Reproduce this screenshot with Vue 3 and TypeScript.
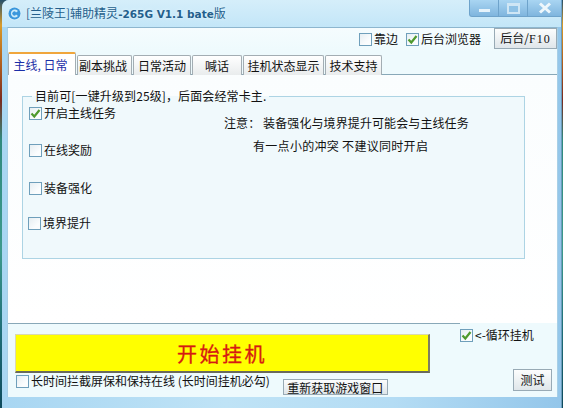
<template>
  <div class="desktop">
    <div class="window">
      <header class="titlebar">
        <svg class="app-icon" width="15" height="15" viewBox="0 0 15 15">
          <circle cx="7.5" cy="7.5" r="7" fill="#d7eef9" />
          <circle cx="7.5" cy="7.5" r="6" fill="#3b97dc" />
          <path d="M11 5 A4 4 0 1 0 11 10 L9 8.5 A2 2 0 1 1 9 6.5 Z" fill="#cdebfa" />
        </svg>
        <span class="app-title">[兰陵王]辅助精灵<b>-265G V1.1 bate</b>版</span>
        <div class="win-btns">
          <button class="win-btn min"><i></i></button>
          <button class="win-btn max"><i></i></button>
          <button class="win-btn close">
            <svg width="14" height="12" viewBox="0 0 14 12"><path d="M2 1.5 L12 10.5 M12 1.5 L2 10.5" stroke="#eef7fc" stroke-width="3" /></svg>
          </button>
        </div>
      </header>

      <div class="client">
        <div class="toolbar">
          <label class="check">
            <span class="box"></span>靠边
          </label>
          <label class="check browser">
            <span class="box"><svg width="11" height="11" viewBox="0 0 11 11"><path d="M1.5 5.5 L4.3 8.5 L9.5 2" fill="none" stroke="#4f9a2e" stroke-width="2.2" /></svg></span>后台浏览器
          </label>
          <button class="btn back-btn">后台/<span class="mono">F10</span></button>
        </div>

        <nav class="tabs">
          <div
            v-for="tab in tabs"
            :key="tab.label"
            class="tab"
            :class="{ active: tab.active }"
            :style="{ width: `${tab.width}px` }"
          >
            {{ tab.label }}
          </div>
        </nav>

        <section class="panel">
          <fieldset class="group">
            <legend>目前可[一键升级到25级]，后面会经常卡主.</legend>
            <div class="group-body">
              <div class="tasks">
                <label
                  v-for="task in tasks"
                  :key="task.label"
                  class="check"
                  :class="task.cls"
                >
                  <span class="box">
                    <svg v-if="task.checked" width="11" height="11" viewBox="0 0 11 11"><path d="M1.5 5.5 L4.3 8.5 L9.5 2" fill="none" stroke="#4f9a2e" stroke-width="2.2" /></svg>
                  </span>{{ task.label }}
                </label>
              </div>
              <div class="notes">
                <p class="note-a">注意：  装备强化与境界提升可能会与主线任务</p>
                <p class="note-b">有一点小的冲突 不建议同时开启</p>
              </div>
            </div>
          </fieldset>
        </section>

        <footer class="bottom">
          <div class="bottom-left">
            <button class="start">开始挂机</button>
            <div class="bottom-row">
              <label class="check">
                <span class="box"></span>长时间拦截屏保和保持在线 (长时间挂机必勾)
              </label>
              <button class="btn refetch">重新获取游戏窗口</button>
            </div>
          </div>
          <div class="bottom-right">
            <label class="check">
              <span class="box"><svg width="11" height="11" viewBox="0 0 11 11"><path d="M1.5 5.5 L4.3 8.5 L9.5 2" fill="none" stroke="#4f9a2e" stroke-width="2.2" /></svg></span>&lt;-循环挂机
            </label>
            <button class="btn test">测试</button>
          </div>
        </footer>
      </div>
    </div>
  </div>
</template>

<script setup lang="ts">
interface Tab {
  label: string
  width: number
  active?: boolean
}

const tabs: Tab[] = [
  { label: '主线, 日常', width: 68, active: true },
  { label: '副本挑战', width: 55 },
  { label: '日常活动', width: 58 },
  { label: '喊话', width: 50 },
  { label: '挂机状态显示', width: 81 },
  { label: '技术支持', width: 57 }
]

const tasks = [
  { label: '开启主线任务', checked: true, cls: 't1' },
  { label: '在线奖励', checked: false, cls: 't2' },
  { label: '装备强化', checked: false, cls: 't3' },
  { label: '境界提升', checked: false, cls: 't4' }
]
</script>

<style>
html,
body {
  margin: 0;
  background: #123;
}
</style>

<style scoped>
.desktop {
  width: 563px;
  height: 408px;
  padding-left: 2px;
  box-sizing: border-box;
  overflow: hidden;
  background: linear-gradient(180deg, #27506a 0, #d99b2a 25px, #b5641e 60px, #7a2a20 100px, #2f8a7e 140px, #3d9a8c 250px, #1f6f78 330px, #0e4a5c 408px);
  font-family: "Noto Sans CJK SC", "Noto Sans", sans-serif;
  font-size: 12px;
  line-height: 14px;
  color: #111;
}
.window {
  width: 560px;
  height: 408px;
  box-sizing: border-box;
  padding: 0 3px 11px 5px;
  display: flex;
  flex-direction: column;
  border-radius: 7px 7px 0 0;
  background: linear-gradient(90deg, #a8d6f2 0, #bfe3f6 40%, #b4dcf4 70%, #93c6ea 100%);
  border-right: 1px solid #6d9dbd;
}
.titlebar {
  height: 27px;
  flex: none;
  display: flex;
  align-items: flex-start;
  margin: 0 -3px 0 -5px;
  padding-left: 5px;
  border-radius: 7px 7px 0 0;
  background: linear-gradient(180deg, #d5eefa 0, #c3e6f8 100%);
}
.app-icon {
  flex: none;
  margin: 6px 0 0 0;
}
.app-title {
  margin: 6px 0 0 4px;
  color: #245f8c;
  text-shadow: 0 0 3px #eaf8ff;
  white-space: nowrap;
}
.app-title b {
  font-family: "DejaVu Sans", sans-serif;
  font-size: 10.5px;
}
.win-btns {
  margin-left: auto;
  margin-right: -1px;
  display: flex;
}
.win-btn {
  height: 17px;
  padding: 0;
  border: 1px solid #6ea3cb;
  border-top: none;
  border-left-width: 0;
  background: linear-gradient(180deg, #a9d5f2 0, #7fb5de 100%);
  display: flex;
  align-items: center;
  justify-content: center;
}
.win-btn.min {
  width: 30px;
  border-left-width: 1px;
  border-bottom-left-radius: 3px;
}
.win-btn.min i {
  display: block;
  width: 11px;
  height: 3px;
  margin-top: 5px;
  background: #e6f3fb;
}
.win-btn.max {
  width: 29px;
}
.win-btn.max i {
  display: block;
  width: 9px;
  height: 6px;
  border: 2px solid #cfe6f5;
  border-top-width: 3px;
  background: #8fc2e6;
}
.win-btn.close {
  width: 34px;
}
.client {
  flex: 1;
  min-height: 0;
  display: flex;
  flex-direction: column;
  background: #eefafd;
  border-top: 1px solid #8db6cf;
  border-left: 1px solid #a7cfe6;
  border-right: 1px solid #a7cfe6;
}
.toolbar {
  height: 24px;
  display: flex;
  align-items: flex-start;
  background: linear-gradient(180deg, #f5fcfe 0, #eefafd 100%);
  padding-right: 0;
  justify-content: flex-end;
}
.check {
  display: inline-flex;
  align-items: center;
  white-space: nowrap;
}
.box {
  width: 11px;
  height: 11px;
  flex: none;
  margin-right: 2px;
  border: 1px solid #6f9fbb;
  background: linear-gradient(135deg, #e6eef2 0, #fbfdfe 70%);
  display: flex;
  align-items: center;
  justify-content: center;
}
.toolbar .check {
  margin-top: 4px;
}
.toolbar .browser {
  margin-left: 8px;
  margin-right: 13px;
}
.btn {
  padding: 0;
  font: inherit;
  color: #111;
  border: 1px solid #98aab5;
  background: linear-gradient(180deg, #fcfdfd 0, #dfe6ea 100%);
}
.back-btn {
  width: 63px;
  height: 21px;
}
.mono {
  font-family: "Liberation Serif", serif;
  letter-spacing: 1px;
}
.tabs {
  height: 23px;
  display: flex;
  align-items: flex-end;
  position: relative;
  z-index: 1;
  margin-bottom: -1px;
  gap: 1px;
  padding-left: 0;
}
.tab {
  height: 20px;
  box-sizing: border-box;
  border: 1px solid #a3adb3;
  border-bottom: none;
  border-radius: 2px 2px 0 0;
  background: linear-gradient(180deg, #ffffff 0, #e9eced 100%);
  display: flex;
  align-items: center;
  justify-content: center;
  white-space: nowrap;
}
.tab:nth-child(2) {
  padding-right: 3px;
}
.tab.active {
  height: 23px;
  color: #1c2fa8;
  background: #fff;
  border-top: 2px solid #f0a63c;
  border-right-color: #a3adb3;
  font-size: 12px;
  padding-right: 3px;
}
.panel {
  height: 250px;
  flex: none;
  box-sizing: border-box;
  padding: 14px 32px 0 14px;
  background: linear-gradient(180deg, #fafdfe 0, #ffffff 100%);
  border-top: 1px solid #88a8b8;
  border-bottom: 1px solid #88a8b8;
}
.group {
  height: 170px;
  box-sizing: border-box;
  margin: 0;
  padding: 0 0 0 6px;
  border: 1px solid #add4e4;
  background: #f0f9fc;
}
.group legend {
  margin-left: 3px;
  padding: 0 3px;
  line-height: 14px;
  letter-spacing: 0.12px;
  white-space: nowrap;
}
.group-body {
  display: flex;
}
.tasks {
  width: 195px;
  flex: none;
  display: flex;
  flex-direction: column;
  align-items: flex-start;
}
.t1 {
  margin-top: 3px;
}
.t2 {
  margin-top: 23px;
}
.t3 {
  margin-top: 24px;
}
.t4 {
  margin-top: 21px;
  margin-left: -1px;
}
.notes {
  padding-top: 13px;
}
.notes p {
  margin: 0;
  white-space: pre;
  letter-spacing: 0.1px;
}
.note-b {
  margin-top: 9px !important;
  padding-left: 29px;
  letter-spacing: 0.3px !important;
}
.bottom {
  flex: 1;
  display: flex;
  background: #eefafd;
}
.bottom-left {
  width: 452px;
  flex: none;
  padding: 10px 0 0 7px;
  box-sizing: border-box;
}
.start {
  display: block;
  width: 415px;
  height: 39px;
  padding: 0;
  border: 1px solid #d9d9b0;
  border-right: 2px solid #7d7d60;
  border-bottom: 2px solid #6a6a5c;
  background: #ffff00;
  color: #d61a12;
  font-family: "Noto Sans CJK SC", sans-serif;
  font-size: 20px;
  letter-spacing: 2.5px;
  -webkit-text-stroke: 0.3px #d61a12;
}
.bottom-row {
  display: flex;
  align-items: flex-start;
  margin-top: 1px;
}
.bottom-row .check {
  margin-left: 1px;
}
.refetch {
  width: 105px;
  height: 16px;
  margin: 5px 0 0 13px;
  line-height: 13px;
  white-space: nowrap;
}
.bottom-right {
  flex: 1;
  display: flex;
  flex-direction: column;
  align-items: flex-start;
  margin-top: -1px;
  padding-top: 5px;
  background: #eefafd;
  position: relative;
}
.test {
  width: 39px;
  height: 22px;
  margin: 27px 0 0 53px;
}
</style>
